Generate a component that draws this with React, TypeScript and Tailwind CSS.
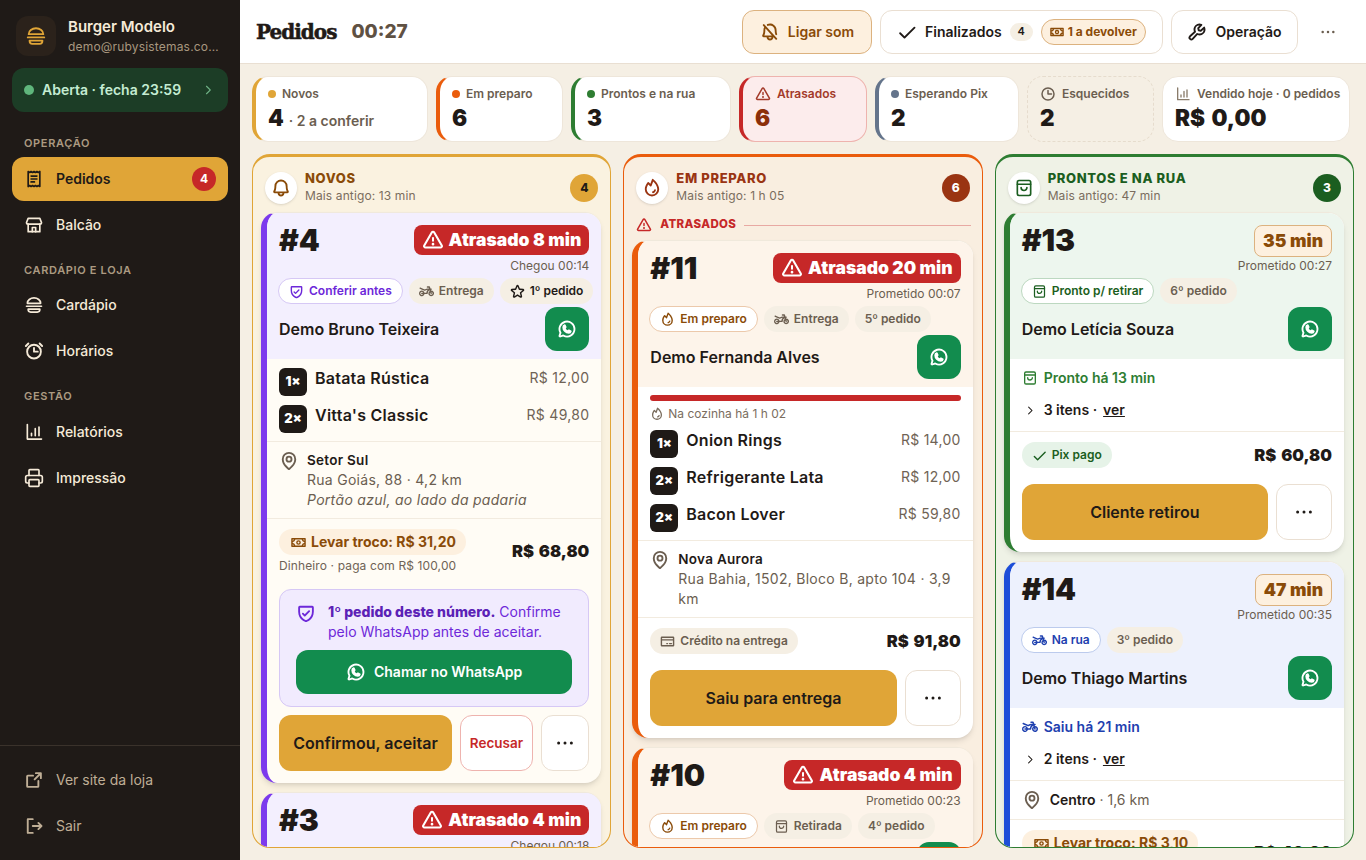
import React from "react";
import {
  PiAlarmBold,
  PiArrowSquareOutBold,
  PiBellBold,
  PiBellSlashBold,
  PiCaretRightBold,
  PiCheckBold,
  PiClockBold,
  PiCreditCardBold,
  PiDotsThreeBold,
  PiFireBold,
  PiMapPinBold,
  PiMoneyBold,
  PiMotorcycleBold,
  PiShieldCheckBold,
  PiSignOutBold,
  PiStarBold,
  PiWarningBold,
  PiWhatsappLogoBold,
  PiWrenchBold,
} from "react-icons/pi";
import { Printer } from "lucide-react";

const display = "font-['Inter',sans-serif] font-black";

// Icons the packages don't have in this shape
const Glyph = ({ children, className }: any) => (
  <svg
    viewBox="0 0 24 24"
    width="1em"
    height="1em"
    fill="none"
    stroke="currentColor"
    strokeWidth="2"
    strokeLinecap="round"
    strokeLinejoin="round"
    className={className}
  >
    {children}
  </svg>
);

const BurgerIcon = (p: any) => (
  <Glyph {...p}>
    <path d="M4 10a8 6.5 0 0 1 16 0z" />
    <path d="M3 13.5h18" />
    <path d="M5 17h14v.5a3 3 0 0 1-3 3H8a3 3 0 0 1-3-3z" />
  </Glyph>
);

const ReceiptIcon = (p: any) => (
  <Glyph {...p}>
    <path d="M5 3l1.75 1.2L8.5 3l1.75 1.2L12 3l1.75 1.2L15.5 3l1.75 1.2L19 3v18l-1.75-1.2L15.5 21l-1.75-1.2L12 21l-1.75-1.2L8.5 21l-1.75-1.2L5 21z" />
    <path d="M8.5 8.5h7M8.5 12h7M8.5 15.5h4" />
  </Glyph>
);

const StoreIcon = (p: any) => (
  <Glyph {...p}>
    <path d="M5 4h14l2 5a2 2 0 0 1-2 2H5a2 2 0 0 1-2-2z" />
    <path d="M5 11v9h14v-9" />
    <path d="M10 20v-5h4v5" />
  </Glyph>
);

const ChartIcon = (p: any) => (
  <Glyph {...p}>
    <path d="M4 3v17.5h17" />
    <path d="M9 16.5v-3M13.5 16.5V8M18 16.5V6" />
  </Glyph>
);

const BagIcon = (p: any) => (
  <Glyph {...p}>
    <rect x="4" y="3" width="16" height="18" rx="2" />
    <path d="M4 7.5h16" />
    <path d="M8.5 11.5a3.5 3.5 0 0 0 7 0" />
  </Glyph>
);

// Sidebar row
const NavItem = ({ icon, label, active, badge, quiet }: any) => (
  <div
    className={`flex h-11 items-center gap-3 rounded-xl px-3 text-sm ${
      active
        ? "bg-[#e0a537] font-semibold text-[#1f1a17]"
        : quiet
        ? "font-normal text-[#bfae96]"
        : "font-medium text-[#f5ead8]"
    }`}
  >
    <span className="text-[20px]">{icon}</span>
    <span className="flex-1">{label}</span>
    {badge && (
      <span className="flex h-6 w-6 items-center justify-center rounded-full bg-[#c62828] text-xs font-bold text-white">
        {badge}
      </span>
    )}
  </div>
);

const NavHeading = ({ children }: any) => (
  <div className="mb-[5px] mt-[15px] px-3 text-[11px] font-semibold uppercase leading-4 tracking-[0.06em] text-[#ac9a82]">
    {children}
  </div>
);

const Sidebar = () => (
  <aside className="flex h-full w-[240px] shrink-0 flex-col bg-[#1f1a17]">
    <div className="flex items-center gap-3 px-4 pt-4">
      <div className="flex h-10 w-10 shrink-0 items-center justify-center rounded-xl bg-[#2b221b] text-[22px] text-[#e0a537]">
        <BurgerIcon />
      </div>
      <div className="min-w-0">
        <div className="text-[15px] font-semibold leading-5 text-[#f5ead8]">Burger Modelo</div>
        <div className="mt-[2px] truncate text-xs leading-4 tracking-[0.015em] text-[#a8977f]">demo@rubysistemas.com.br</div>
      </div>
    </div>
    <div className="mx-3 mt-3 flex h-11 items-center rounded-xl bg-[#1c3d26] px-3 text-sm font-semibold text-[#c4ecd2]">
      <span className="mr-2 h-[10px] w-[10px] rounded-full bg-[#5fb67c]" />
      <span className="flex-1">Aberta · fecha 23:59</span>
      <PiCaretRightBold className="mr-[2px] text-xs text-[#6fb285]" />
    </div>
    <nav className="flex flex-1 flex-col px-3 pt-[8px]">
      <NavHeading>Operação</NavHeading>
      <div className="mt-px flex flex-col gap-[2px]">
        <NavItem icon={<ReceiptIcon />} label="Pedidos" active badge="4" />
        <NavItem icon={<StoreIcon />} label="Balcão" />
      </div>
      <NavHeading>Cardápio e loja</NavHeading>
      <div className="flex flex-col gap-[2px]">
        <NavItem icon={<BurgerIcon />} label="Cardápio" />
        <NavItem icon={<PiAlarmBold />} label="Horários" />
      </div>
      <NavHeading>Gestão</NavHeading>
      <div className="mt-px flex flex-col gap-[2px]">
        <NavItem icon={<ChartIcon />} label="Relatórios" />
        <NavItem icon={<Printer size={20} />} label="Impressão" />
      </div>
    </nav>
    <div className="flex flex-col gap-[2px] border-t border-[#3a322b] px-3 pb-[12px] pt-[12px]">
      <NavItem icon={<PiArrowSquareOutBold />} label="Ver site da loja" quiet />
      <NavItem icon={<PiSignOutBold />} label="Sair" quiet />
    </div>
  </aside>
);

const Header = () => (
  <header className="flex h-16 shrink-0 items-center border-b border-[#e9dfd2] bg-white pl-4 pr-4 text-[#1f1a17]">
    <h1 className="font-['DejaVu_Serif',serif] text-[20px] font-bold leading-none tracking-[-0.05em] [-webkit-text-stroke:0.5px_#1f1a17]">Pedidos</h1>
    <span className="ml-[15px] mt-[2px] text-[19px] font-extrabold text-[#5f5143]">00:27</span>
    <div className="ml-auto flex items-center gap-2">
      <button className="flex h-11 w-[130px] items-center justify-center gap-2 rounded-xl border border-[#dcb27f] bg-[#fdf0df] text-sm font-semibold text-[#8a4b08]">
        <PiBellSlashBold className="text-[20px]" />
        Ligar som
      </button>
      <button className="flex h-11 w-[283px] items-center gap-2 rounded-xl border border-[#eadfd2] bg-white pl-4 text-sm font-semibold">
        <PiCheckBold className="text-[20px]" />
        <span>Finalizados</span>
        <span className="flex h-[18px] w-[23px] items-center justify-center rounded-full bg-[#f5efe4] text-[11px] font-semibold">4</span>
        <span className="flex h-[26px] items-center gap-1 rounded-full border border-[#dcb27f] bg-[#fdf0df] px-2 text-xs font-bold text-[#8a4b08]">
          <PiMoneyBold className="text-[14px]" />1 a devolver
        </span>
      </button>
      <button className="flex h-11 w-[127px] items-center justify-center gap-2 rounded-xl border border-[#eadfd2] bg-white text-sm font-semibold">
        <PiWrenchBold className="text-[20px]" />
        Operação
      </button>
      <button className="flex h-11 w-11 items-center justify-center text-[20px] text-[#6b5e50]">
        <PiDotsThreeBold />
      </button>
    </div>
  </header>
);

const Stat = ({ width, tone, label, lead, value, note, valueClass }: any) => (
  <div className={`flex h-[66px] flex-col justify-center rounded-2xl border pl-3 pr-2 ${width} ${tone}`}>
    <div className="flex items-center gap-[6px] text-xs font-semibold leading-4 text-[#6b5e50]">
      {lead}
      {label}
    </div>
    <div className="mt-[2px] flex items-baseline leading-7">
      <span className={`${display} text-[22.5px] [word-spacing:2px] ${valueClass ?? "text-[#1f1a17]"}`}>{value}</span>
      {note && <span className="ml-[5px] text-sm font-semibold text-[#6b5e50]">{note}</span>}
    </div>
  </div>
);

const Dot = ({ color }: { color: string }) => <span className={`h-2 w-2 rounded-full ${color}`} />;

const StatsRow = () => (
  <div className="flex shrink-0 gap-2">
    <Stat width="w-[176px]" tone="border-[#eee6da] border-l-4 border-l-[#e0a537] bg-white" lead={<Dot color="bg-[#e0a537]" />} label="Novos" value="4" note="· 2 a conferir" />
    <Stat width="w-[127px]" tone="border-[#eee6da] border-l-4 border-l-[#ea5c0c] bg-white" lead={<Dot color="bg-[#ea5c0c]" />} label="Em preparo" value="6" />
    <Stat width="w-[160px]" tone="border-[#eee6da] border-l-4 border-l-[#2e7d32] bg-white" lead={<Dot color="bg-[#2e7d32]" />} label="Prontos e na rua" value="3" />
    <Stat width="w-[128px]" tone="border-[#eeb3ae] border-l-4 border-l-[#c62828] bg-[#fcecec]" lead={<PiWarningBold className="text-[16px] text-[#a33a2a]" />} label={<span className="text-[#a33a2a]">Atrasados</span>} value="6" valueClass="text-[#8c2f0a]" />
    <Stat width="w-[144px]" tone="border-[#eee6da] border-l-4 border-l-[#64748b] bg-white" lead={<Dot color="bg-[#64748b]" />} label="Esperando Pix" value="2" />
    <Stat width="w-[127px]" tone="border-dashed border-[#e6dccd] bg-transparent" lead={<PiClockBold className="text-[16px] text-[#6b5e50]" />} label="Esquecidos" value="2" />
    <Stat width="w-[188px]" tone="border-[#eee6da] bg-white" lead={<ChartIcon className="text-[16px] text-[#8a7c6b]" />} label="Vendido hoje · 0 pedidos" value="R$ 0,00" />
  </div>
);

const Chip = ({ icon, children, kind }: any) => (
  <span
    className={`flex h-[26px] items-center gap-[5px] whitespace-nowrap rounded-full px-[10px] text-xs font-semibold ${kind ?? "bg-[#f5efe4] text-[#6b5e50]"}`}
  >
    {icon && <span className="text-[15px]">{icon}</span>}
    {children}
  </span>
);

const Timer = ({ children, late }: any) =>
  late ? (
    <div className={`flex h-[30px] items-center gap-[5px] rounded-lg bg-[#c62828] px-2 text-[17.5px] text-white ${display}`}>
      <PiWarningBold className="text-[22px]" />
      {children}
    </div>
  ) : (
    <div className={`flex h-8 items-center rounded-lg border border-[#dcb27f] bg-[#fdf0df] px-2 text-[17.5px] text-[#8a4b08] ${display}`}>
      {children}
    </div>
  );

// Top block shared by every order card
const CardTop = ({ num, timer, late, sub, chips, name, tint }: any) => (
  <div className={`px-3 pt-3 ${tint}`}>
    <div className="flex items-start justify-between">
      <span className={`${display} text-[30px] leading-[30px] text-[#1f1a17]`}>{num}</span>
      <div className="flex flex-col items-end">
        <Timer late={late}>{timer}</Timer>
        <span className={`text-xs leading-[18px] text-[#6b5e50] ${late ? "mt-[2px]" : ""}`}>{sub}</span>
      </div>
    </div>
    <div className="-ml-px mt-[3px] flex gap-[6px]">{chips}</div>
    <div className="mt-[3px] flex items-center justify-between pb-2">
      <span className="text-base font-semibold text-[#1f1a17]">{name}</span>
      <span className="flex h-11 w-11 items-center justify-center rounded-xl bg-[#128c4e] text-[20px] text-white">
        <PiWhatsappLogoBold />
      </span>
    </div>
  </div>
);

const Item = ({ qty, name, price }: any) => (
  <div className="flex h-7 items-start">
    <span className={`flex h-7 w-7 shrink-0 items-center justify-center rounded-md bg-[#1f1a17] text-[13px] text-white ${display}`}>{qty}</span>
    <span className="ml-2 flex-1 text-base font-semibold leading-5 tracking-[0.015em] text-[#1f1a17]">{name}</span>
    <span className="text-sm leading-5 tracking-[0.02em] text-[#6f6355]">{price}</span>
  </div>
);

const Items = ({ rows }: any) => (
  <div className="flex flex-col gap-[9px]">
    {rows.map((r: any) => (
      <Item key={r.name} {...r} />
    ))}
  </div>
);

const Address = ({ title, lines }: any) => (
  <div className="flex gap-2 border-b border-[#f2ebdf] px-3 py-[8px]">
    <PiMapPinBold className="mt-[1px] shrink-0 text-[20px] text-[#6b5e50]" />
    <div className="text-sm leading-5 tracking-[0.02em] text-[#6b5e50]">
      <div className="text-[13.5px] font-semibold text-[#1f1a17]">{title}</div>
      {lines}
    </div>
  </div>
);

const Total = ({ children }: any) => <span className={`${display} text-[16.5px] [word-spacing:1.5px] text-[#1f1a17]`}>{children}</span>;

// Cash chip with the "paga com" note underneath
const CashRow = ({ change, note, total, pad }: any) => (
  <div className={`flex items-center justify-between px-3 pt-[10px] ${pad}`}>
    <div>
      <Chip kind="h-7 bg-[#fdf0df] pl-3 text-[#8a4b08]" icon={<PiMoneyBold />}>
        <span className="text-sm font-bold">Levar troco: {change}</span>
      </Chip>
      <div className="mt-1 text-xs leading-[14px] tracking-[0.01em] text-[#6f6355]">{note}</div>
    </div>
    <Total>{total}</Total>
  </div>
);

const Actions = ({ label }: any) => (
  <div className="flex h-14 gap-2 px-3">
    <button className="flex-1 whitespace-nowrap rounded-xl bg-[#e0a537] text-base font-semibold text-[#1f1a17]">{label}</button>
    <button className="flex w-14 shrink-0 items-center justify-center rounded-xl border border-[#eadfd2] bg-white text-[24px] text-[#1f1a17]">
      <PiDotsThreeBold />
    </button>
  </div>
);

const ColumnHeader = ({ icon, title, color, sub, count, countTone }: any) => (
  <div className="flex items-center px-3 pb-2 pt-[14px]">
    <span className={`flex h-8 w-8 items-center justify-center rounded-full bg-white text-[20px] shadow-sm ${color}`}>{icon}</span>
    <div className="ml-2 flex-1">
      <div className={`text-[13px] font-extrabold uppercase leading-[15px] tracking-[0.05em] ${color}`}>{title}</div>
      <div className="mt-[2px] text-xs leading-4 tracking-[0.01em] text-[#7a6d5e]">{sub}</div>
    </div>
    <span className={`flex h-7 w-7 items-center justify-center rounded-full text-xs font-extrabold ${countTone}`}>{count}</span>
  </div>
);

const StatusLine = ({ icon, color, children }: any) => (
  <div className={`flex items-center gap-[6px] px-3 pt-[9px] text-sm font-semibold leading-5 ${color}`}>
    <span className="text-[16px]">{icon}</span>
    {children}
  </div>
);

const ItemsToggle = ({ children }: any) => (
  <div className="flex items-center gap-[6px] border-b border-[#f2ebdf] px-3 pb-[11px] pt-3 text-sm font-semibold leading-5 text-[#1f1a17]">
    <PiCaretRightBold className="w-4 text-[11px]" />
    {children} · <span className="underline">ver</span>
  </div>
);

const cardBase = "shrink-0 overflow-hidden rounded-2xl border-t border-t-[#f0e9dc] border-l-[6px] shadow-md";

const Novos = () => (
  <section className="flex min-h-0 flex-col overflow-hidden rounded-[18px] border border-t-[3px] border-[#e0a537] bg-[#faf2e0]">
    <ColumnHeader icon={<PiBellBold />} title="Novos" color="text-[#8a4b08]" sub="Mais antigo: 13 min" count="4" countTone="bg-[#e0a537] text-[#1f1a17]" />
    <div className="flex flex-col gap-[9px] pl-2 pr-[9px]">
      <article className={`${cardBase} border-l-[#7c3aed] bg-[#fffcf5]`}>
        <CardTop
          tint="bg-[#f3effe]"
          num="#4"
          late
          timer="Atrasado 8 min"
          sub="Chegou 00:14"
          name="Demo Bruno Teixeira"
          chips={
            <>
              <Chip kind="border border-[#d6c8f5] bg-white text-[#6d28d9]" icon={<PiShieldCheckBold />}>Conferir antes</Chip>
              <Chip icon={<PiMotorcycleBold />}>Entrega</Chip>
              <Chip kind="bg-[#f5efe4] font-bold text-[#1f1a17]" icon={<PiStarBold />}>1º pedido</Chip>
            </>
          }
        />
        <div className="border-b border-[#f2ebdf] px-3 pb-2 pt-[9px]">
          <Items rows={[{ qty: "1×", name: "Batata Rústica", price: "R$ 12,00" }, { qty: "2×", name: "Vitta's Classic", price: "R$ 49,80" }]} />
        </div>
        <Address
          title="Setor Sul"
          lines={
            <>
              <div>Rua Goiás, 88 · 4,2 km</div>
              <div className="italic">Portão azul, ao lado da padaria</div>
            </>
          }
        />
        <CashRow change="R$ 31,20" note="Dinheiro · paga com R$ 100,00" total="R$ 68,80" pad="pb-4" />
        <div className="mx-3 mb-2 rounded-xl border border-[#d6c8f5] bg-[#f1ebfe] px-4 pb-[12px] pt-[12px]">
          <div className="flex gap-3 text-sm leading-5 text-[#6d28d9]">
            <PiShieldCheckBold className="mt-[1px] shrink-0 text-[20px]" />
            <div>
              <span className="font-extrabold text-[#5b21b6]">1º pedido deste número.</span> Confirme pelo WhatsApp antes de aceitar.
            </div>
          </div>
          <button className="mt-2 flex h-11 w-full items-center justify-center gap-2 rounded-xl bg-[#128c4e] text-sm font-semibold text-white">
            <PiWhatsappLogoBold className="text-[20px]" />
            Chamar no WhatsApp
          </button>
        </div>
        <div className="flex h-14 gap-2 px-3">
          <button className="w-[173px] whitespace-nowrap rounded-xl bg-[#e0a537] text-base font-semibold text-[#1f1a17]">Confirmou, aceitar</button>
          <button className="w-[73px] rounded-xl border border-[#eeb3ae] bg-white text-[13.5px] font-semibold text-[#c62828]">Recusar</button>
          <button className="flex w-12 items-center justify-center rounded-xl border border-[#eadfd2] bg-white text-[24px] text-[#1f1a17]">
            <PiDotsThreeBold />
          </button>
        </div>
        <div className="h-3" />
      </article>
      <article className={`${cardBase} border-l-[#7c3aed] bg-[#f3effe]`}>
        <CardTop tint="bg-[#f3effe]" num="#3" late timer="Atrasado 4 min" sub="Chegou 00:18" name="Demo Carla Dias" chips={<Chip>Entrega</Chip>} />
      </article>
    </div>
  </section>
);

const EmPreparo = () => (
  <section className="flex min-h-0 flex-col overflow-hidden rounded-[18px] border border-t-[3px] border-[#ea5c0c] bg-[#f9eee0]">
    <ColumnHeader icon={<PiFireBold />} title="Em preparo" color="text-[#9a3412]" sub="Mais antigo: 1 h 05" count="6" countTone="bg-[#9a3412] text-white" />
    <div className="flex flex-col pl-2 pr-[9px]">
      <div className="mb-[6px] ml-[4px] mr-[2px] mt-1 flex h-[18px] items-center gap-2 text-[11.5px] font-extrabold tracking-[0.03em] text-[#c62828]">
        <PiWarningBold className="text-[16px]" />
        ATRASADOS
        <span className="h-px flex-1 bg-[#e8a9a3]" />
      </div>
      <div className="flex flex-col gap-[9px]">
        <article className={`${cardBase} border-l-[#ea5c0c] bg-white`}>
          <CardTop
            tint="bg-[#fdf4ea]"
            num="#11"
            late
            timer="Atrasado 20 min"
            sub="Prometido 00:07"
            name="Demo Fernanda Alves"
            chips={
              <>
                <Chip kind="border border-[#ecc9ab] bg-white text-[#8a4b08]" icon={<PiFireBold />}>Em preparo</Chip>
                <Chip icon={<PiMotorcycleBold />}>Entrega</Chip>
                <Chip>5º pedido</Chip>
              </>
            }
          />
          <div className="border-b border-[#f2ebdf] px-3 pb-2 pt-2">
            <div className="h-[6px] rounded-full bg-[#c62828]" />
            <div className="mb-[6px] mt-[3px] flex h-5 items-center gap-1 text-xs text-[#7a6d5e]">
              <PiFireBold className="text-[14px]" />
              Na cozinha há 1 h 02
            </div>
            <Items
              rows={[
                { qty: "1×", name: "Onion Rings", price: "R$ 14,00" },
                { qty: "2×", name: "Refrigerante Lata", price: "R$ 12,00" },
                { qty: "2×", name: "Bacon Lover", price: "R$ 59,80" },
              ]}
            />
          </div>
          <Address title="Nova Aurora" lines={<div>Rua Bahia, 1502, Bloco B, apto 104 · 3,9 km</div>} />
          <div className="flex items-center justify-between px-3 pb-4 pt-[10px]">
            <Chip kind="h-6 bg-[#f5efe4] text-[#6b5e50]" icon={<PiCreditCardBold />}>Crédito na entrega</Chip>
            <Total>R$ 91,80</Total>
          </div>
          <Actions label="Saiu para entrega" />
          <div className="h-3" />
        </article>
        <article className={`${cardBase} border-l-[#ea5c0c] bg-[#fdf4ea]`}>
          <CardTop
            tint="bg-[#fdf4ea]"
            num="#10"
            late
            timer="Atrasado 4 min"
            sub="Prometido 00:23"
            name="Demo Rafael Lima"
            chips={
              <>
                <Chip kind="border border-[#ecc9ab] bg-white text-[#8a4b08]" icon={<PiFireBold />}>Em preparo</Chip>
                <Chip icon={<BagIcon />}>Retirada</Chip>
                <Chip>4º pedido</Chip>
              </>
            }
          />
        </article>
      </div>
    </div>
  </section>
);

const Prontos = () => (
  <section className="flex min-h-0 flex-col overflow-hidden rounded-[18px] border border-t-[3px] border-[#2e7d32] bg-[#eff2e6]">
    <ColumnHeader icon={<BagIcon />} title="Prontos e na rua" color="text-[#1b5e20]" sub="Mais antigo: 47 min" count="3" countTone="bg-[#1b5e20] text-white" />
    <div className="flex flex-col gap-[9px] pl-2 pr-[9px]">
      <article className={`${cardBase} border-l-[#2e7d32] bg-white`}>
        <CardTop
          tint="bg-[#edf6ee]"
          num="#13"
          timer="35 min"
          sub="Prometido 00:27"
          name="Demo Letícia Souza"
          chips={
            <>
              <Chip kind="border border-[#bcd8c0] bg-white text-[#1b5e20]" icon={<BagIcon />}>Pronto p/ retirar</Chip>
              <Chip>6º pedido</Chip>
            </>
          }
        />
        <StatusLine icon={<BagIcon />} color="text-[#2e7d32]">Pronto há 13 min</StatusLine>
        <ItemsToggle>3 itens</ItemsToggle>
        <div className="flex items-center justify-between px-3 pb-4 pt-[10px]">
          <Chip kind="h-6 bg-[#e6f3e8] text-[#1b5e20]" icon={<PiCheckBold />}>Pix pago</Chip>
          <Total>R$ 60,80</Total>
        </div>
        <Actions label="Cliente retirou" />
        <div className="h-3" />
      </article>
      <article className={`${cardBase} border-l-[#1d4ed8] bg-white`}>
        <CardTop
          tint="bg-[#edf1fd]"
          num="#14"
          timer="47 min"
          sub="Prometido 00:35"
          name="Demo Thiago Martins"
          chips={
            <>
              <Chip kind="border border-[#bccbed] bg-white text-[#1e40af]" icon={<PiMotorcycleBold />}>Na rua</Chip>
              <Chip>3º pedido</Chip>
            </>
          }
        />
        <StatusLine icon={<PiMotorcycleBold />} color="text-[#1e40af]">Saiu há 21 min</StatusLine>
        <ItemsToggle>2 itens</ItemsToggle>
        <div className="flex items-center gap-2 border-b border-[#f2ebdf] px-3 py-[9px] text-sm leading-5 text-[#6b5e50]">
          <PiMapPinBold className="text-[20px]" />
          <span>
            <span className="font-semibold text-[#1f1a17]">Centro</span> · 1,6 km
          </span>
        </div>
        <CashRow change="R$ 3,10" note="Dinheiro · paga com R$ 50,00" total="R$ 46,90" pad="pb-4" />
      </article>
    </div>
  </section>
);

const App = () => (
  <div className="flex h-screen w-full overflow-hidden bg-[#f5efe4] font-['Inter',sans-serif]">
    <Sidebar />
    <main className="flex min-w-0 flex-1 flex-col">
      <Header />
      <div className="flex min-h-0 flex-1 flex-col gap-3 p-3">
        <StatsRow />
        <div className="grid min-h-0 flex-1 grid-cols-3 gap-3">
          <Novos />
          <EmPreparo />
          <Prontos />
        </div>
      </div>
    </main>
  </div>
);

export default App;
